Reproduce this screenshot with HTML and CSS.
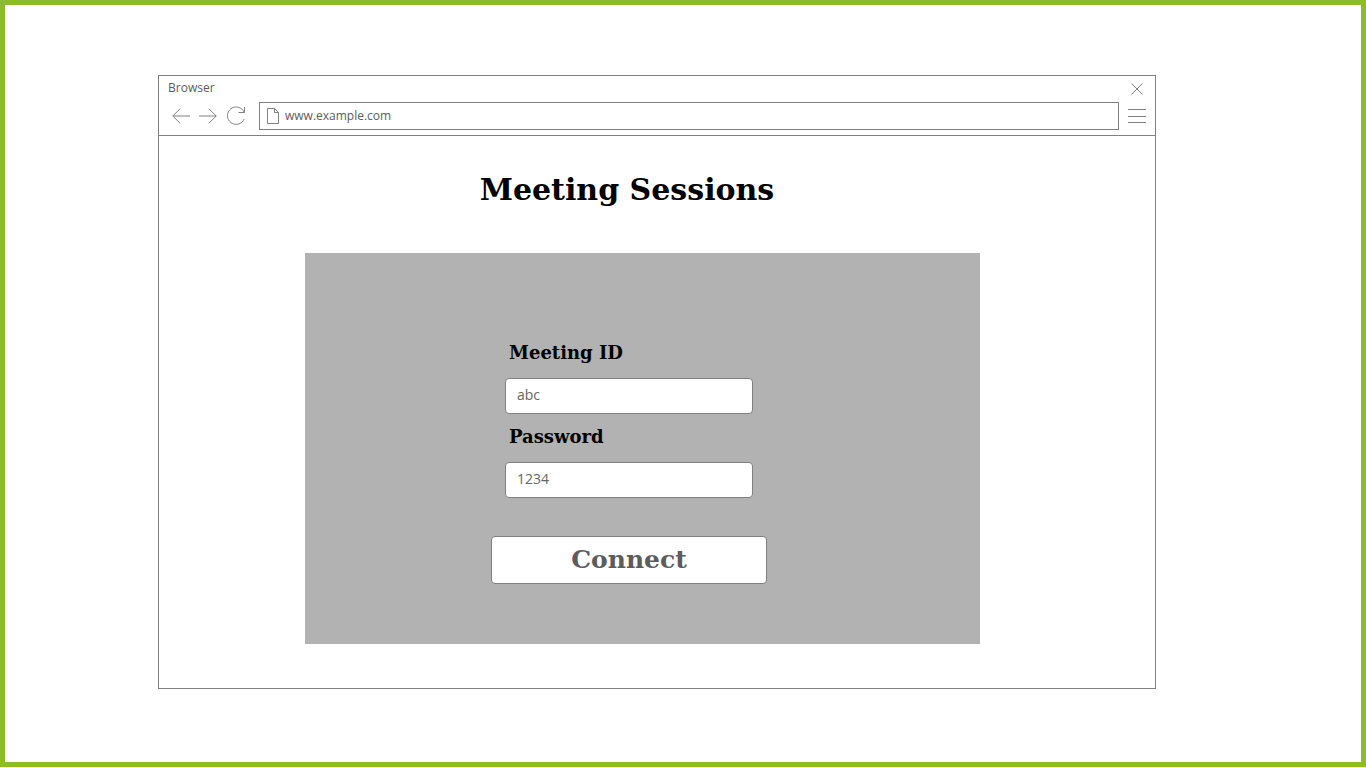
FILE: index.html
```html
<!DOCTYPE html>
<html lang="en">
<head>
<meta charset="utf-8">
<title>Meeting Sessions</title>
<link rel="stylesheet" href="styles.css">
</head>
<body>
<div class="page">
  <div class="browser">
    <header class="chrome">
      <div class="title-row">
        <span class="title">Browser</span>
        <button class="icon-button close" type="button" aria-label="Close">
          <svg width="12" height="12" viewBox="0 0 12 12"><path d="M.5 .5l11 11M11.5 .5l-11 11"/></svg>
        </button>
      </div>
      <div class="toolbar">
        <button class="icon-button" type="button" aria-label="Back">
          <svg width="18" height="16" viewBox="0 0 18 16"><path d="M18 8H.8M8 .8L.8 8L8 15.2"/></svg>
        </button>
        <button class="icon-button" type="button" aria-label="Forward">
          <svg width="18" height="16" viewBox="0 0 18 16"><path d="M0 8h17.2M10 .8L17.2 8L10 15.2"/></svg>
        </button>
        <button class="icon-button" type="button" aria-label="Reload">
          <svg width="20" height="20" viewBox="0 0 20 20"><path d="M18.5 1v5.5H12.5M18.2 6.3A8.7 8.7 0 1 0 18.2 13"/></svg>
        </button>
        <div class="address">
          <svg width="12" height="16" viewBox="0 0 12 16"><path d="M.5 .5h7l4 4v11H.5zM7.5 .5v4h4"/></svg>
          <input class="url" type="text" value="www.example.com" aria-label="Address">
        </div>
        <button class="icon-button" type="button" aria-label="Menu">
          <svg width="18" height="15" viewBox="0 0 18 15"><path d="M0 .5h18M0 7.5h18M0 13.5h18"/></svg>
        </button>
      </div>
    </header>
    <main class="content">
      <h1 class="heading">Meeting Sessions</h1>
      <section class="panel">
        <form class="form">
          <label class="label" for="meeting-id">Meeting ID</label>
          <input class="field" id="meeting-id" type="text" value="abc">
          <label class="label" for="password">Password</label>
          <input class="field" id="password" type="text" value="1234">
          <button class="connect" type="button">Connect</button>
        </form>
      </section>
    </main>
  </div>
</div>
</body>
</html>
```
FILE: styles.css
```css
* {
  box-sizing: border-box;
}

body {
  margin: 0;
  background: #fff;
  color: #5c5c5c;
  font-family: "Open Sans", "Noto Sans", sans-serif;
}

.page {
  display: grid;
  grid-template-columns: 153fr 998fr 205fr;
  align-items: start;
  min-height: calc(100vh - 1px);
  padding: 70px 0;
  border: 5px solid #8cbd26;
}

.browser {
  grid-column: 2;
  border: 1px solid #808080;
}

.chrome {
  padding: 2px 9px 5px;
  border-bottom: 1px solid #808080;
}

.title-row {
  display: flex;
  align-items: center;
  justify-content: space-between;
  height: 20px;
  margin-bottom: 4px;
}

.title {
  font-size: 12px;
  line-height: 16px;
}

.close {
  padding: 2px 3px 0;
}

.toolbar {
  display: flex;
  align-items: center;
  gap: 9px;
  padding-left: 4px;
}

.icon-button {
  display: flex;
  flex: none;
  margin: 0;
  border: 0;
  background: none;
}

.toolbar .icon-button {
  padding: 0;
}

svg {
  flex: none;
  fill: none;
  stroke: #808080;
  stroke-width: 1;
}

.address {
  display: flex;
  flex: 1;
  align-items: center;
  gap: 6px;
  height: 28px;
  margin-left: 4px;
  padding: 0 7px;
  border: 1px solid #808080;
}

.url {
  flex: 1;
  min-width: 0;
  padding: 0 0 1px;
  border: 0;
  background: none;
  color: inherit;
  font-family: inherit;
  font-size: 12px;
  line-height: 18px;
}

.content {
  padding: 32px 0 44px;
}

.heading,
.label,
.connect {
  font-family: "DejaVu Serif", serif;
  font-weight: bold;
}

.heading {
  margin: 0 0 41px;
  padding-right: 60px;
  color: #000;
  font-size: 30px;
  line-height: 44px;
  text-align: center;
}

.panel {
  display: grid;
  grid-template-columns: 186fr 276fr 213fr;
  margin: 0 calc(100% * 175 / 996) 0 calc(100% * 146 / 996);
  padding: 88px 0 60px;
  background: #b2b2b2;
}

.form {
  display: flex;
  grid-column: 2;
  flex-direction: column;
}

.label {
  padding-left: 18px;
  color: #000;
  font-size: 18px;
  line-height: 24px;
}

.field {
  height: 36px;
  margin: 13px 14px 11px;
  padding: 0 11px 3px;
  border: 1px solid #808080;
  border-radius: 4px;
  background: #fff;
  color: #666;
  font-family: inherit;
  font-size: 14px;
}

.connect {
  height: 48px;
  margin-top: 27px;
  padding: 0;
  border: 1px solid #808080;
  border-radius: 4px;
  background: #fff;
  color: #5c5c5c;
  font-size: 25px;
  line-height: 40px;
}
```
